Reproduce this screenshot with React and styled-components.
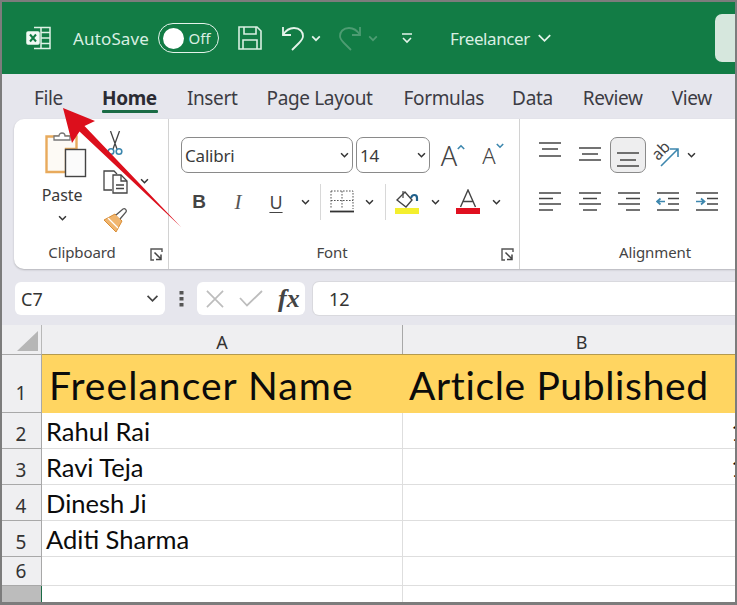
import React from "react";
import styled, { createGlobalStyle } from "styled-components";

const Global = createGlobalStyle`
  html, body { margin: 0; padding: 0; background: #fff; overflow: hidden; }
  * { box-sizing: border-box; }
`;
const UI = `"Noto Sans", "Open Sans", sans-serif`;
const CELL = `Lato, "Liberation Sans", sans-serif`;

const Frame = styled.div`
  position: relative; width: 737px; height: 605px; border: 2px solid #7c7c7c; border-bottom-width: 3px;
  overflow: hidden; background: #e6e6ed; font-family: ${UI}; color: #333;
  display: flex; flex-direction: column;
`;
const TitleBar = styled.header`
  height: 72px; flex: none; background: #127c45; color: #d9efe2; display: flex; align-items: center;
  padding-left: 24px; position: relative;
`;
const Slot = styled.div`
  width: ${p => p.$w}px; flex: none; display: flex; align-items: center; justify-content: center;
  margin-left: ${p => p.$ml || 0}px; margin-top: ${p => p.$mt || 0}px;
`;
const AutoSave = styled.span`font-size: 17px; margin-left: 21px; width: 85px; letter-spacing: 0.15px;`;
const Toggle = styled.div`
  width: 61px; height: 30px; border: 1.5px solid #e4f3ea; border-radius: 15px; display: flex; align-items: center;
  padding-left: 3.5px; gap: 5px; font-size: 15px; flex: none;
`;
const Knob = styled.span`width: 21px; height: 21px; border-radius: 50%; background: #fff;`;
const DocName = styled.span`font-size: 17px; margin-left: 20px; width: 86px; letter-spacing: -0.4px;`;
const SearchBox = styled.div`
  position: absolute; left: 713px; top: 12px; width: 60px; height: 48px; background: #d6e7dd; border-radius: 7px;
`;
const Tabs = styled.nav`
  height: 44px; flex: none; display: flex; align-items: center; padding: 3px 0 0 32px; font-size: 19px; gap: 30px;
  letter-spacing: -0.35px; color: #3c3c44;
`;
const Tab = styled.span`
  position: relative; white-space: nowrap; margin-left: ${p => p.$ml || 0}px;
  font-weight: ${p => p.$active ? 700 : 400};
  ${p => p.$active && `
    color: #2b2b33;
    &::after { content: ""; position: absolute; left: 0; right: -1px; bottom: -2px; height: 3px; background: #1a6b45; border-radius: 1px; }
  `}
`;
const Ribbon = styled.section`
  height: 150px; margin: 1px 0 0 12px; flex: none; background: #fff; border-radius: 10px 0 0 10px;
  box-shadow: 0 1px 2px rgba(0,0,0,.22); display: flex; width: 800px;
`;
const Group = styled.div`
  width: ${p => p.$w}px; flex: none; position: relative; display: flex; flex-direction: column;
  border-right: ${p => p.$sep ? "1px solid #d2d2d2" : "0"}; padding-left: ${p => p.$pl || 0}px; 
`;
const GroupBody = styled.div`flex: 1; min-height: 0; display: flex; flex-direction: column; padding-top: 18px;`;
const GroupLabel = styled.div`
  height: 35px; flex: none; font-size: 15px; color: #444; display: flex; align-items: center;
  width: ${p => p.$w}px; justify-content: center; letter-spacing: -0.1px;
`;
const Launcher = styled.svg`position: absolute; right: 5px; bottom: 8px; width: 13px; height: 13px;`;
const ClipBody = styled.div`flex: 1; min-height: 0; display: flex;`;
const PasteCol = styled.div`width: 96px; padding-top: 13px; display: flex; flex-direction: column; align-items: center; flex: none;`;
const PasteIconWrap = styled.div`margin-left: 8px; height: 46px;`;
const PasteLabel = styled.span`font-size: 16px; margin-top: 6px; color: #3a3a3a; letter-spacing: -0.1px;`;
const ClipTools = styled.div`display: flex; flex-direction: column; width: 50px; padding-top: 5px;`;
const ToolRow = styled.div`display: flex; align-items: center; height: ${p => p.$h}px; flex: none;`;
const Row = styled.div`display: flex; align-items: center; height: 36px; margin-bottom: ${p => p.$mb || 0}px;`;
const Select = styled.div`
  width: ${p => p.$w}px; height: 36px; border: 1px solid #8a8a8a; border-radius: 7px; flex: none; background: #fff;
  display: flex; align-items: center; justify-content: space-between; padding: 0 3px; font-size: 17px; color: #3a3a3a;
  margin-right: ${p => p.$mr || 0}px; letter-spacing: -0.2px;
`;
const VSep = styled.div`width: 1px; height: 36px; background: #d8d8d8;`;
const Pressed = styled.div`
  width: 36px; height: 36px; border: 1px solid #8a8a8a; border-radius: 7px; background: #eeeeef; flex: none; margin: 0 1px;
  display: flex; align-items: flex-start; justify-content: center; overflow: hidden;
`;
const BoldB = styled.span`font-family: "Liberation Sans", sans-serif; font-weight: 700; font-size: 19px; color: #444;`;
const ItalicI = styled.span`font-family: "Liberation Serif", serif; font-style: italic; font-size: 21px; color: #555;`;
const UnderU = styled.span`font-size: 18px; text-decoration: underline; text-underline-offset: 3px; color: #444;`;
const BigA = styled.span`font-size: ${p => p.$s}px; color: #444; line-height: 1; font-weight: 300; display: inline-block;`;

const FormulaRow = styled.div`
  height: 33px; margin-top: 13px; flex: none; display: flex; align-items: stretch; padding-left: 13px; 
`;
const NameBox = styled.div`
  width: 150px; background: #fff; border-radius: 6px; display: flex; align-items: center; justify-content: space-between;
  padding: 0 6px; font-size: 18px; color: #333; flex: none;
`;
const Dots = styled.div`width: 32px; display: flex; align-items: center; justify-content: center; flex: none;`;
const FxBox = styled.div`
  width: 108px; background: #fff; border-radius: 6px; flex: none; display: flex; align-items: center; padding-left: 9px; gap: 15px;
`;
const Fx = styled.span`font-family: "Liberation Serif", serif; font-style: italic; font-weight: 700; font-size: 26px; line-height: 1; color: #444;`;
const FormulaInput = styled.div`
  margin-left: 8px; flex: 1; background: #fff; border-radius: 6px 0 0 6px; display: flex; align-items: center; padding-left: 16px; font-size: 18px; color: #333;
  box-shadow: 0 0 0 1px #d9d9de;
`;
const Sheet = styled.div`margin-top: 10px; flex: 1; display: flex; flex-direction: column; background: #fff;`;
const SheetRow = styled.div`
  display: grid; grid-template-columns: 40px 361px 1fr; height: ${p => p.$h}px; flex: none;
`;
const Corner = styled.div`background: #efeff1; border-right: 1px solid #b8b8b8; display: flex; align-items: flex-end; justify-content: flex-end; padding: 0 3px 3px 0;`;
const ColHead = styled.div`
  background: #efeff1; display: flex; align-items: flex-end; justify-content: center; font-size: 18px; color: #333; padding-bottom: 0;
  border-right: ${p => p.$sep ? "1px solid #a8a8a8" : "0"}; padding-left: ${p => p.$pad || 0}px; line-height: 1.35;
`;
const RowHead = styled.div`
  background: ${p => p.$dark ? "#bcbcbc" : "#efeff1"}; border-right: 1px solid ${p => p.$dark ? "#1a6b45" : "#a8a8a8"};
  border-bottom: 1px solid #a8a8a8; display: flex; justify-content: center; font-size: 19px; color: #333; line-height: 1.35;
  align-items: ${p => p.$dark ? "flex-start" : "flex-end"};
  padding-top: ${p => p.$dark ? 12 : 0}px;
  padding-bottom: ${p => p.$gold ? 5 : 0}px;
  border-top: ${p => p.$gold ? "1px solid #a8a8a8" : "0"}; padding-right: 1px; overflow: hidden;
`;
const Cell = styled.div`
  background: ${p => p.$head ? "#ffd561" : "#fff"}; 
  border-bottom: 1px solid ${p => p.$head ? "#ffd561" : "#dedede"};
  border-right: ${p => p.$sep ? "1px solid #dedede" : "0"};
  border-top: ${p => p.$head ? "1px solid #b49a4e" : "0"};
  display: flex; align-items: flex-end; overflow: hidden; white-space: nowrap; color: #0b0b0b; font-family: ${CELL};
  font-size: ${p => p.$head ? 39 : 25.5}px; line-height: 1.25;
  letter-spacing: ${p => p.$ls || 0}px;
  padding-left: ${p => p.$pl}px;
  padding-bottom: ${p => p.$head ? 2 : 0}px;
`;
const Arrow = styled.svg`position: absolute; left: -2px; top: -2px; pointer-events: none;`;
const OrientSvg = styled.svg`overflow: visible;`;

const Chev = ({ s = 10, c = "#333", w = 1.7 }) => (
  <svg width={s} height={s * 0.7} viewBox="0 0 10 7"><path d="M1.2 1.4 5 5.2 8.8 1.4" fill="none" stroke={c} strokeWidth={w} /></svg>
);
const Lines = ({ w = 24, ys, xs, c = "#444" }) => (
  <svg width={w} height="36" viewBox={`0 0 ${w} 36`}>
    {ys.map((y, i) => <path key={i} d={`M${xs[i][0]} ${y}H${xs[i][1]}`} stroke={c} strokeWidth="1.5" />)}
  </svg>
);
const full = [1, 23], mid = [4, 20];
const LauncherIcon = () => (
  <Launcher viewBox="0 0 13 13">
    <path d="M12 4V1H1v11h3" fill="none" stroke="#555" strokeWidth="1.4" />
    <path d="M4.5 4.5 11 11M11 6.5V11.5H6" fill="none" stroke="#444" strokeWidth="1.5" />
  </Launcher>
);
const ExcelLogo = () => (
  <svg width="26" height="26" viewBox="0 0 26 26" fill="none" stroke="#dff1e6" strokeWidth="1.5">
    <path d="M8 2.5h16v21H8" />
    <path d="M15 2.5v21M15 7.5h9M15 13h9M15 18.5h9" />
    <rect x="1" y="7" width="12" height="12" fill="#f2faf5" stroke="#f2faf5" rx="1" />
    <path d="M4 9.5 10 16.5M10 9.5 4 16.5" stroke="#127c45" strokeWidth="2" />
  </svg>
);
const SaveIcon = () => (
  <svg width="24" height="24" viewBox="0 0 24 24" fill="none" stroke="#d9efe2" strokeWidth="1.6">
    <path d="M1 1h18l4 4v18H1z" /><path d="M6 1v7h12V1M5 23v-9h14v9" />
  </svg>
);
const Undo = ({ flip, c = "#e4f3ea" }) => (
  <svg width="24" height="26" viewBox="0 0 24 26" fill="none" stroke={c} strokeWidth="1.8" style={flip ? { transform: "scaleX(-1)" } : undefined}>
    <path d="M2 2v8h8" /><path d="M2 10C5 5 9 3 13 3c6 0 9 4 9 8 0 3-2 5-4 7l-7 7" />
  </svg>
);
const Qat = () => (
  <svg width="12" height="11" viewBox="0 0 12 11" fill="none" stroke="#e4f3ea" strokeWidth="1.6">
    <path d="M1 1h10M2 5l4 4 4-4" />
  </svg>
);
const PasteIcon = () => (
  <svg width="42" height="46" viewBox="0 0 42 46" fill="none">
    <path d="M1.5 4.5h30V17H21v23H1.5z" fill="#fdfaf5" stroke="#e8aa5c" strokeWidth="2.4" />
    <path d="M9 8V4h5c0-4 6-4 6 0h5v4z" fill="#fff" stroke="#777" strokeWidth="1.3" />
    <rect x="20.5" y="17.5" width="20" height="27" fill="#fbfbfb" stroke="#444" strokeWidth="1.4" />
  </svg>
);
const CutIcon = () => (
  <svg width="16" height="25" viewBox="0 0 16 25" fill="none">
    <path d="M3.5 0 10 18M12.5 0 6 18" stroke="#444" strokeWidth="1.3" />
    <circle cx="4" cy="20.5" r="2.8" stroke="#3d87ae" strokeWidth="1.6" />
    <circle cx="12" cy="20.5" r="2.8" stroke="#3d87ae" strokeWidth="1.6" />
  </svg>
);
const CopyIcon = () => (
  <svg width="25" height="24" viewBox="0 0 25 24" fill="none" stroke="#444" strokeWidth="1.3">
    <path d="M9 20H1V1h10l3 3" />
    <path d="M10 5h8l6 6v12H10z" fill="#fff" />
    <path d="M18 5v6h6M13 15h8M13 18.5h8" />
  </svg>
);
const BrushIcon = () => (
  <svg width="25" height="25" viewBox="0 0 25 25" fill="none">
    <path d="M1 12 12 6l7 7-6 11z" fill="#f0b56e" stroke="#d98d35" strokeWidth="1" />
    <path d="M5 10 15 20" stroke="#fff" strokeWidth="1.2" />
    <path d="M13 7 20 1c2-1 4 1 3 3l-6 7" fill="#fff" stroke="#555" strokeWidth="1.3" />
  </svg>
);
const SmallCaret = ({ up }) => (
  <svg width="8" height="6" viewBox="0 0 10 7" style={{ marginTop: up ? -16 : -18 }}>
    <path d={up ? "M1 6 5 2l4 4" : "M1 1l4 4 4-4"} fill="none" stroke="#3d87ae" strokeWidth="2" />
  </svg>
);
const BorderIcon = () => (
  <svg width="24" height="24" viewBox="0 0 24 24" fill="none">
    <path d="M1 1h22v18M1 1v18M12 1v18M1 10.5h22" stroke="#555" strokeWidth="1" strokeDasharray="1.6 1.4" />
    <path d="M0 21.5h24" stroke="#333" strokeWidth="1.8" />
  </svg>
);
const FillIcon = () => (
  <svg width="26" height="26" viewBox="0 0 26 26" fill="none">
    <path d="M3 11 11 3l7 8-6 7z" stroke="#444" strokeWidth="1.4" fill="#fff" />
    <path d="M9 2v7" stroke="#444" strokeWidth="1.2" />
    <path d="M17 9c1-4 6-4 6 0v3" stroke="#1f5f8a" strokeWidth="2.2" />
    <rect x="1" y="19" width="24" height="6" fill="#f4ef2e" />
  </svg>
);
const ColorAIcon = () => (
  <svg width="24" height="26" viewBox="0 0 24 26" fill="none">
    <path d="M4.5 18 12 1l7.5 17M7 12.5h10" stroke="#444" strokeWidth="1.4" />
    <rect y="19" width="24" height="6" fill="#e01020" />
  </svg>
);
const OrientIcon = () => (
  <OrientSvg width="28" height="28" viewBox="0 0 28 28" fill="none">
    <path d="M9 25 26 8M18 8h8v8" stroke="#3d87ae" strokeWidth="1.6" />
    <text x="9" y="15" fontSize="16" fill="#444" textAnchor="middle" fontFamily="Noto Sans, sans-serif" transform="rotate(-45 9 10)">ab</text>
  </OrientSvg>
);
const IndentIcon = ({ right }) => (
  <svg width="24" height="36" viewBox="0 0 24 36">
    <g stroke="#444" strokeWidth="1.5">
      <path d="M1 9H23M12 14.5H23M12 20H23M1 26H23" />
    </g>
    <path d={right ? "M1 17.5H9M6 14.5 9.5 17.5 6 20.5" : "M9 17.5H1M4.5 14.5 1 17.5 4.5 20.5"} fill="none" stroke="#3d87ae" strokeWidth="1.7" />
  </svg>
);
const SheetCorner = () => (
  <svg width="21" height="20" viewBox="0 0 21 20"><path d="M21 0V20H0z" fill="#b6b6b6" /></svg>
);
const DotsIcon = () => (
  <svg width="5" height="16" viewBox="0 0 5 16" fill="#555"><rect x="0.5" y="0" width="4" height="3.5" /><rect x="0.5" y="6" width="4" height="3.5" /><rect x="0.5" y="12" width="4" height="3.5" /></svg>
);
const ys4 = [9, 14.5, 20, 26];
const LeftAlign = () => <Lines ys={ys4} xs={[full, [1, 15], full, [1, 15]]} />;
const CenterAlign = () => <Lines ys={ys4} xs={[full, [5, 19], full, [5, 19]]} />;
const RightAlign = () => <Lines ys={ys4} xs={[full, [9, 23], full, [9, 23]]} />;

const rows = [
  { n: 2, h: 36, a: "Rahul Rai", b: "12" },
  { n: 3, h: 36, a: "Ravi Teja", b: "15" },
  { n: 4, h: 36, a: "Dinesh Ji" },
  { n: 5, h: 36, a: "Aditi Sharma" },
  { n: 6, h: 29 },
];

export default function App() {
  return (
    <Frame>
      <Global />
      <TitleBar>
        <ExcelLogo />
        <AutoSave>AutoSave</AutoSave>
        <Toggle><Knob />Off</Toggle>
        <Slot $w={24} $ml={19}><SaveIcon /></Slot>
        <Slot $w={24} $ml={19}><Undo /></Slot>
        <Slot $w={22}><Chev s={10} c="#e4f3ea" /></Slot>
        <Slot $w={24} $ml={11}><Undo flip c="#4d9c72" /></Slot>
        <Slot $w={22}><Chev s={10} c="#4d9c72" /></Slot>
        <Slot $w={46}><Qat /></Slot>
        <DocName>Freelancer</DocName>
        <Slot $w={16}><Chev s={15} c="#e4f3ea" w={1.2} /></Slot>
        <SearchBox />
      </TitleBar>
      <Tabs>
        <Tab>File</Tab><Tab $active $ml={9}>Home</Tab><Tab>Insert</Tab><Tab $ml={-1}>Page Layout</Tab>
        <Tab $ml={1}>Formulas</Tab><Tab $ml={-2}>Data</Tab><Tab>Review</Tab><Tab $ml={-1}>View</Tab>
      </Tabs>
      <Ribbon>
        <Group $w={155} $sep>
          <ClipBody>
            <PasteCol>
              <PasteIconWrap><PasteIcon /></PasteIconWrap>
              <PasteLabel>Paste</PasteLabel>
              <Slot $w={20} $mt={9}><Chev s={9} /></Slot>
            </PasteCol>
            <ClipTools>
              <ToolRow $h={38}><Slot $w={16} $ml={-3}><CutIcon /></Slot></ToolRow>
              <ToolRow $h={39}><Slot $w={25} $ml={-7}><CopyIcon /></Slot><Slot $w={16} $ml={8}><Chev s={9} /></Slot></ToolRow>
              <ToolRow $h={39}><Slot $w={25} $ml={-7}><BrushIcon /></Slot></ToolRow>
            </ClipTools>
          </ClipBody>
          <GroupLabel $w={136}>Clipboard</GroupLabel>
          <LauncherIcon />
        </Group>
        <Group $w={351} $sep $pl={12}>
          <GroupBody>
            <Row $mb={11}>
              <Select $w={172} $mr={3}>Calibri<Chev s={9} /></Select>
              <Select $w={74}>14<Chev s={9} /></Select>
              <Slot $w={26} $ml={10}><BigA $s={27}>A</BigA><SmallCaret up /></Slot>
              <Slot $w={22} $ml={16}><BigA $s={22}>A</BigA><SmallCaret /></Slot>
            </Row>
            <Row>
              <Slot $w={36}><BoldB>B</BoldB></Slot>
              <Slot $w={42}><ItalicI>I</ItalicI></Slot>
              <Slot $w={34}><UnderU>U</UnderU></Slot>
              <Slot $w={24}><Chev s={9} /></Slot>
              <Slot $w={6}><VSep /></Slot>
              <Slot $w={38}><BorderIcon /></Slot>
              <Slot $w={16}><Chev s={9} /></Slot>
              <Slot $w={16}><VSep /></Slot>
              <Slot $w={28}><FillIcon /></Slot>
              <Slot $w={28}><Chev s={9} /></Slot>
              <Slot $w={38}><ColorAIcon /></Slot>
              <Slot $w={18}><Chev s={9} /></Slot>
            </Row>
          </GroupBody>
          <GroupLabel $w={302}>Font</GroupLabel>
          <LauncherIcon />
        </Group>
        <Group $w={280} $pl={10}>
          <GroupBody>
            <Row $mb={11}>
              <Slot $w={40}><Lines ys={[6, 12, 19]} xs={[full, mid, full]} /></Slot>
              <Slot $w={39}><Lines ys={[11, 17, 23]} xs={[full, mid, full]} /></Slot>
              <Pressed><Lines ys={[15, 22, 28]} xs={[full, mid, full]} /></Pressed>
              <Slot $w={38}><OrientIcon /></Slot>
              <Slot $w={12}><Chev s={9} /></Slot>
            </Row>
            <Row>
              <Slot $w={40}><LeftAlign /></Slot>
              <Slot $w={39}><CenterAlign /></Slot>
              <Slot $w={39}><RightAlign /></Slot>
              <Slot $w={39}><IndentIcon /></Slot>
              <Slot $w={39}><IndentIcon right /></Slot>
            </Row>
          </GroupBody>
          <GroupLabel $w={250}>Alignment</GroupLabel>
        </Group>
      </Ribbon>
      <FormulaRow>
        <NameBox>C7<Chev s={13} c="#444" w={1.3} /></NameBox>
        <Dots><DotsIcon /></Dots>
        <FxBox>
          <svg width="18" height="18" viewBox="0 0 19 19"><path d="M1 1 18 18M18 1 1 18" stroke="#bdbdbd" strokeWidth="1.8" /></svg>
          <svg width="24" height="17" viewBox="0 0 24 17"><path d="M1 8 8 15.5 23 1" fill="none" stroke="#bdbdbd" strokeWidth="1.8" /></svg>
          <Fx>fx</Fx>
        </FxBox>
        <FormulaInput>12</FormulaInput>
      </FormulaRow>
      <Sheet>
        <SheetRow $h={29}>
          <Corner><SheetCorner /></Corner>
          <ColHead $sep>A</ColHead>
          <ColHead $pad={25}>B</ColHead>
        </SheetRow>
        <SheetRow $h={59}>
          <RowHead $gold>1</RowHead>
          <Cell $head $pl={7} $ls={1.05}>Freelancer Name</Cell>
          <Cell $head $pl={6} $ls={0.65}>Article Published</Cell>
        </SheetRow>
        {rows.map(r => (
          <SheetRow key={r.n} $h={r.h}>
            <RowHead>{r.n}</RowHead>
            <Cell $sep $pl={4}>{r.a}</Cell>
            <Cell $pl={328}>{r.b}</Cell>
          </SheetRow>
        ))}
        <SheetRow $h={20}>
          <RowHead $dark>7</RowHead>
          <Cell $sep $pl={5} />
          <Cell $pl={5} />
        </SheetRow>
      </Sheet>
      <Arrow width="737" height="605" viewBox="0 0 737 605">
        <path d="M63 108 95 121 84.5 126 181 227 79.5 131.5 72 143z" fill="#dc0f1c" />
      </Arrow>
    </Frame>
  );
}
